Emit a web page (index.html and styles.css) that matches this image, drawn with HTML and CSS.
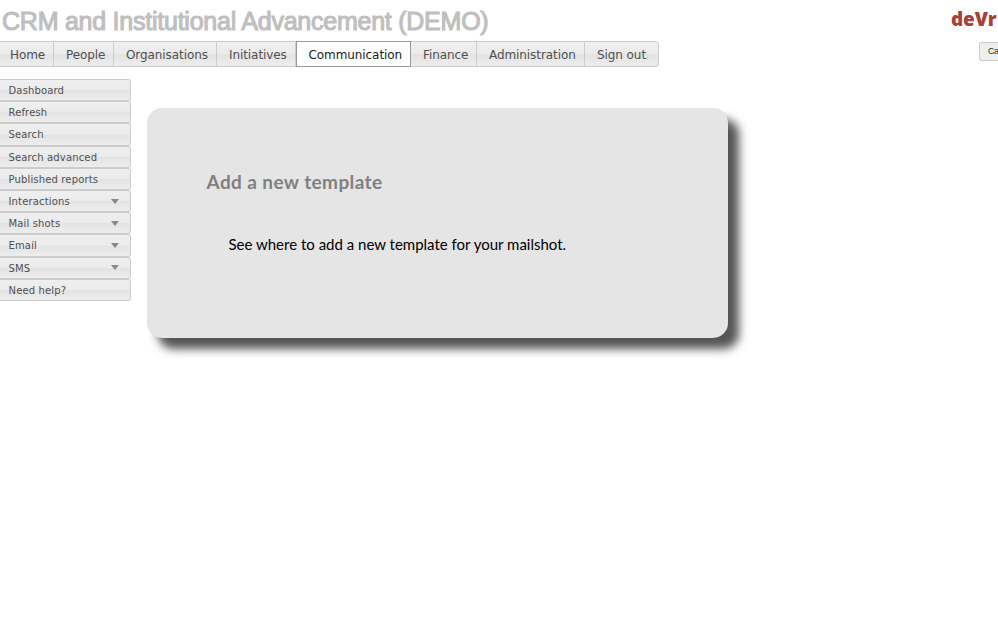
FILE: index.html
```html
<!DOCTYPE html>
<html lang="en">
<head>
<meta charset="utf-8">
<title>CRM and Institutional Advancement</title>
<link rel="stylesheet" href="styles.css">
</head>
<body>
<header class="header">
  <h1 class="title">CRM and Institutional Advancement (DEMO)</h1>
  <div class="brand">deVr</div>
</header>
<div class="bar">
  <nav class="tabs">
    <a class="tab home">Home</a>
    <a class="tab people">People</a>
    <a class="tab organisations">Organisations</a>
    <a class="tab initiatives">Initiatives</a>
    <a class="tab communication active">Communication</a>
    <a class="tab finance">Finance</a>
    <a class="tab administration">Administration</a>
    <a class="tab signout">Sign out</a>
  </nav>
  <button class="calendar">Ca</button>
</div>
<div class="content">
  <nav class="side">
    <a class="item">Dashboard</a>
    <a class="item">Refresh</a>
    <a class="item">Search</a>
    <a class="item">Search advanced</a>
    <a class="item">Published reports</a>
    <a class="item more">Interactions</a>
    <a class="item more">Mail shots</a>
    <a class="item more">Email</a>
    <a class="item more">SMS</a>
    <a class="item">Need help?</a>
  </nav>
  <main class="panel">
    <h2 class="heading">Add a new template</h2>
    <p class="text">See where to add a new template for your mailshot.</p>
  </main>
</div>
</body>
</html>
```
FILE: styles.css
```css
* { box-sizing: border-box; }
body { margin: 0; min-height: 100vh; background: #fff; font-family: "DejaVu Sans", sans-serif; color: #505050; }
.header { display: flex; justify-content: space-between; height: 41px; }
.title { margin: 0; padding: 6px 0 0 2px; font: 400 25px/30px "Liberation Sans", sans-serif; letter-spacing: -.24px; color: #bfbfbf; -webkit-text-stroke: 1.1px #bfbfbf; white-space: nowrap; }
.brand { width: 47px; flex: none; padding-top: 7px; font: 800 19px/24px "Open Sans", sans-serif; letter-spacing: -.1px; color: #a8403a; }
.bar { display: flex; justify-content: space-between; height: 38px; align-items: flex-start; }
.tabs { display: flex; width: 659px; height: 26px; border: 1px solid #ccc; border-left: 0; border-radius: 0 4px 4px 0; background: linear-gradient(#efefef 0, #ebebeb 50%, #e3e3e3 51%, #ededed 100%); }
.tab { flex: none; height: 24px; border-right: 1px solid #ccc; padding-left: 12px; font-size: 12px; line-height: 26px; letter-spacing: -.08px; white-space: nowrap; }
.home { width: 54px; padding-left: 10px; }
.people { width: 60px; }
.organisations { width: 103px; }
.initiatives { width: 79px; }
.communication { width: 115px; }
.finance { width: 66px; }
.administration { width: 108px; }
.signout { width: 73px; border: 0; }
.active { height: 26px; margin-top: -1px; border: 1px solid #999; padding-left: 11.5px; background: #fff; color: #212121; }
.calendar { width: 19px; height: 19px; flex: none; margin-top: 1px; padding: 0 0 0 8px; border: 1px solid #ccc; border-right: 0; border-radius: 3px 0 0 3px; background: #eee; font: 9px/17px "Liberation Sans", sans-serif; letter-spacing: -.5px; color: #333; text-align: left; }
.content { display: flex; align-items: flex-start; }
.side { width: 131px; flex: none; }
.item { display: flex; justify-content: space-between; align-items: center; height: 22.2px; padding: 1px 11px 0 8.5px; border: 1px solid #ccc; border-left: 0; border-radius: 0 3px 3px 0; background: linear-gradient(#efefef 0, #ebebeb 50%, #e3e3e3 51%, #ededed 100%); font-size: 10px; letter-spacing: .15px; }
.more::after { content: ""; margin-bottom: 1px; border: 4px solid transparent; border-top: 5px solid #888; border-bottom: 0; }
.panel { width: 581px; height: 230px; margin: 29px 0 0 16px; padding: 61px 0 0 59.5px; border-radius: 15px; background: #e5e5e5; box-shadow: 11px 11px 10px #555; font-family: Lato, sans-serif; }
.heading { margin: 0; font-size: 19px; line-height: 26px; letter-spacing: .4px; color: #808080; }
.text { margin: 37px 0 0 22px; font-size: 15px; line-height: 24px; color: #000; white-space: nowrap; }
```
